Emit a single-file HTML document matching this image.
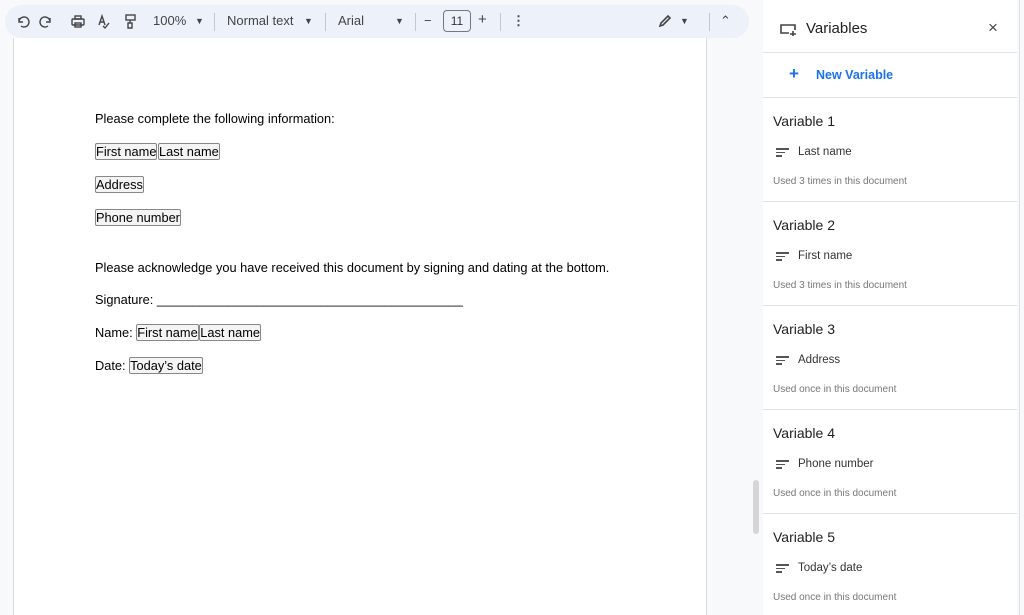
<!DOCTYPE html>
<html><head><meta charset="utf-8"><style>
*{margin:0;padding:0;box-sizing:border-box}
body{width:1024px;height:615px;overflow:hidden;background:#f8f9fa;font-family:"Liberation Sans",Arial,sans-serif;position:relative}
.tb{position:absolute;left:5px;top:5px;width:744px;height:33px;background:#edf2fa;border-radius:17px}
.t{position:absolute;top:13px;font-size:13px;color:#444}
.sep{position:absolute;top:13px;width:1px;height:18px;background:#c7c7c7}
.page{position:absolute;left:13px;top:38px;width:694px;height:577px;background:#fff;border-left:1px solid #dadce0;border-right:1px solid #dadce0}
.p{position:absolute;left:82px;font-size:12.8px;color:#000}
.chip{border:1px solid #888;border-radius:2px;padding:0;background:#f4f4f4}
.panel{position:absolute;left:763px;top:0;width:254px;height:615px;background:#fff}
.hr{position:absolute;left:0;width:254px;height:1px;background:#e3e3e3}
.vt{position:absolute;left:10px;font-size:14px;color:#1f1f1f}
.vn{position:absolute;left:35px;font-size:11.5px;color:#333}
.vu{position:absolute;left:10px;font-size:10px;color:#777}
.ic{position:absolute;left:13px;width:13px}
.ic i{display:block;height:1.5px;background:#555;margin-bottom:2px}
</style></head><body>
<div class="tb"></div>
<svg style="position:absolute;left:16px;top:14px" width="120" height="16" fill="none" stroke="#444" stroke-width="1.4">
<path d="M3 4v4h4M3 8a5 5 0 1 1 2 4"/>
<path d="M34 4v4h-4M34 8a5 5 0 1 0-2 4"/>
<rect x="56" y="5" width="12" height="6" rx="1"/><rect x="59" y="2" width="6" height="3"/><rect x="59" y="9" width="6" height="4"/>
<path d="M83 11l3-9 3 9M84 8h4M87 12l2 2 4-5"/>
<rect x="110" y="1" width="9" height="5"/><path d="M114 6v3M112 9h4v5h-4z"/>
</svg>
<div class="t" style="left:153px">100%</div><div class="t" style="left:195px;font-size:9px;top:16px">▼</div>
<div class="sep" style="left:214px"></div>
<div class="t" style="left:227px">Normal text</div><div class="t" style="left:304px;font-size:9px;top:16px">▼</div>
<div class="sep" style="left:325px"></div>
<div class="t" style="left:338px">Arial</div><div class="t" style="left:395px;font-size:9px;top:16px">▼</div>
<div class="sep" style="left:415px"></div>
<div class="t" style="left:424px">−</div>
<div style="position:absolute;left:443px;top:10px;width:28px;height:22px;border:1px solid #777;border-radius:4px;font-size:12px;text-align:center;line-height:20px;color:#333">11</div>
<div class="t" style="left:478px;font-size:15px;top:11px">+</div>
<div class="sep" style="left:500px"></div>
<div class="t" style="left:512px;font-weight:bold">⋮</div>
<svg style="position:absolute;left:658px;top:14px" width="14" height="14" fill="none" stroke="#444" stroke-width="1.6"><path d="M2 12l1-3 7-7 2 2-7 7z"/></svg>
<div class="t" style="left:680px;font-size:9px;top:16px">▼</div>
<div class="sep" style="left:709px"></div>
<div class="t" style="left:720px">⌃</div>
<div class="page"></div>
<div class="p" style="top:111px;left:95px">Please complete the following information:</div>
<div class="p" style="top:144px;left:95px"><span class="chip">First name</span> <span class="chip" style="margin-left:-3px">Last name</span></div>
<div class="p" style="top:177px;left:95px"><span class="chip">Address</span></div>
<div class="p" style="top:210px;left:95px"><span class="chip">Phone number</span></div>
<div class="p" style="top:260px;left:95px">Please acknowledge you have received this document by signing and dating at the bottom.</div>
<div class="p" style="top:292px;left:95px">Signature: ___________________________________________</div>
<div class="p" style="top:325px;left:95px">Name: <span class="chip">First name</span> <span class="chip" style="margin-left:-3px">Last name</span></div>
<div class="p" style="top:358px;left:95px">Date: <span class="chip">Today’s date</span></div>
<div style="position:absolute;left:753px;top:480px;width:6px;height:54px;background:#d5d5d5;border-radius:3px"></div>
<div class="panel">
<svg style="position:absolute;left:16px;top:22px" width="20" height="14" fill="none" stroke="#444" stroke-width="1.6"><path d="M10 11H2V3h14v5M14 9v5M11 12h6"/></svg>
<div style="position:absolute;left:43px;top:20px;font-size:15px;color:#1f1f1f">Variables</div>
<div style="position:absolute;left:225px;top:18px;font-size:17px;color:#444">×</div>
<div class="hr" style="top:52px"></div>
<div style="position:absolute;left:26px;top:64px;font-size:17px;color:#1a73e8;font-weight:bold">+</div>
<div style="position:absolute;left:53px;top:68px;font-size:12.5px;color:#1a73e8;font-weight:bold">New Variable</div>
<div class="hr" style="top:97px"></div>
<div class="vt" style="top:113px">Variable 1</div><div class="ic" style="top:148px"><i></i><i style="width:9px"></i><i style="width:6px"></i></div><div class="vn" style="top:146px">Last name</div><div class="vu" style="top:176px">Used 3 times in this document</div>
<div class="hr" style="top:201px"></div>
<div class="vt" style="top:217px">Variable 2</div><div class="ic" style="top:252px"><i></i><i style="width:9px"></i><i style="width:6px"></i></div><div class="vn" style="top:250px">First name</div><div class="vu" style="top:280px">Used 3 times in this document</div>
<div class="hr" style="top:305px"></div>
<div class="vt" style="top:321px">Variable 3</div><div class="ic" style="top:356px"><i></i><i style="width:9px"></i><i style="width:6px"></i></div><div class="vn" style="top:354px">Address</div><div class="vu" style="top:384px">Used once in this document</div>
<div class="hr" style="top:409px"></div>
<div class="vt" style="top:425px">Variable 4</div><div class="ic" style="top:460px"><i></i><i style="width:9px"></i><i style="width:6px"></i></div><div class="vn" style="top:458px">Phone number</div><div class="vu" style="top:488px">Used once in this document</div>
<div class="hr" style="top:513px"></div>
<div class="vt" style="top:529px">Variable 5</div><div class="ic" style="top:564px"><i></i><i style="width:9px"></i><i style="width:6px"></i></div><div class="vn" style="top:562px">Today’s date</div><div class="vu" style="top:592px">Used once in this document</div>
</div>
<div style="position:absolute;left:1019px;top:0;width:1px;height:615px;background:#e0e0e0"></div>
</body></html>
